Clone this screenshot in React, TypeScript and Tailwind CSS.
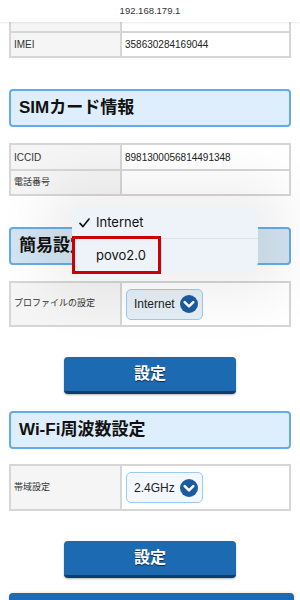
import React from 'react';

const font = { fontFamily: '"Liberation Sans", "Noto Sans CJK JP", sans-serif' };

const Heading: React.FC<{ title: string; dim?: boolean }> = ({ title, dim }) => (
  <div
    className={`h-[38px] rounded-[4px] border-2 border-[#62acec] flex items-center pl-[8px] text-[17px] font-bold text-[#111] ${
      dim ? 'bg-[#d3e3f1]' : 'bg-[#dfeefc]'
    }`}
  >
    {title}
  </div>
);

const Row: React.FC<{ label: string; h: string; first?: boolean; labelClass?: string; children?: React.ReactNode }> = ({
  label,
  h,
  first,
  labelClass = 'text-[9px]',
  children
}) => (
  <div className={`flex ${h} ${first ? '' : 'border-t-2 border-[#d6d6d6]'}`}>
    <div className={`w-[111px] shrink-0 bg-[#f5f5f5] border-r-2 border-[#d6d6d6] flex items-center pl-[3px] text-[#333] ${labelClass}`}>
      {label}
    </div>
    <div className="flex-1 bg-white flex items-center pl-[3px] text-[10px] text-[#222]">{children}</div>
  </div>
);

const Chevron = () => (
  <svg width="18" height="18" viewBox="0 0 20 20">
    <circle cx="10" cy="10" r="10" fill="#1b5c9f" />
    <path d="M5.2 7.8 L10 12.6 L14.8 7.8" stroke="#fff" strokeWidth="2.8" fill="none" strokeLinecap="round" strokeLinejoin="round" />
  </svg>
);

const Select: React.FC<{ value: string; bg: string }> = ({ value, bg }) => (
  <div className={`h-[31px] ml-[1px] rounded-[5px] border border-[#9ccbf0] ${bg} flex items-center gap-[5px] pl-[7px] pr-[4px]`}>
    <span className="text-[12px] text-[#222]">{value}</span>
    <Chevron />
  </div>
);

const Button = () => (
  <div className="flex justify-center">
    <div
      className="w-[172px] h-[37px] rounded-[4px] bg-[#1c6bb2] border-b-[3px] border-[#0f3d6e] shadow-[0_1px_2px_rgba(0,0,0,0.3)] flex items-center justify-center text-white font-bold text-[16px]"
      style={{ textShadow: '0 1px 1px rgba(0,0,0,0.6)' }}
    >
      設定
    </div>
  </div>
);

export default function App() {
  return (
    <div className="w-[300px] h-[600px] overflow-hidden bg-white relative" style={font}>
      {/* Address bar */}
      <div className="h-[22px] bg-white flex items-center justify-center text-[9.5px] text-[#333] shadow-[0_1px_2px_rgba(0,0,0,0.08)] relative z-10">
        192.168.179.1
      </div>

      <div className="px-[9px]">
        {/* Device table (cut at top) */}
        <div className="border-2 border-t-0 border-[#d6d6d6]">
          <Row label="" h="h-[9px]" first />
          <Row label="IMEI" h="h-[25px]" labelClass="text-[10px]">
            358630284169044
          </Row>
        </div>

        <div className="h-[31px]" />
        <Heading title="SIMカード情報" />
        <div className="h-[16px]" />
        <div className="border-2 border-[#d6d6d6]">
          <Row label="ICCID" h="h-[24px]" first labelClass="text-[10px]">
            8981300056814491348
          </Row>
          <Row label="電話番号" h="h-[25px]" />
        </div>

        <div className="h-[31px]" />
        <Heading title="簡易設定" dim />
        <div className="h-[16px]" />
        <div className="border-2 border-[#d6d6d6]">
          <Row label="プロファイルの設定" h="h-[42px]" first>
            <Select value="Internet" bg="bg-[#e6eef6]" />
          </Row>
        </div>

        <div className="h-[30px]" />
        <Button />
        <div className="h-[17px]" />
        <Heading title="Wi-Fi周波数設定" />
        <div className="h-[15px]" />
        <div className="border-2 border-[#d6d6d6]">
          <Row label="帯域設定" h="h-[43px]" first>
            <Select value="2.4GHz" bg="bg-[#f2f8fe]" />
          </Row>
        </div>

        <div className="h-[30px]" />
        <Button />
        <div className="h-[15px]" />
        <div className="h-[20px] rounded-[4px] bg-[#1c6bb2] shadow-[0_0_3px_rgba(200,150,100,0.5)] mr-[-3px]" />
      </div>

      {/* Picker popup */}
      <div
        className="absolute left-[72px] top-[207px] w-[186px] h-[65px] rounded-[10px] bg-[#eef3f9] shadow-[0_0_50px_30px_rgba(0,0,0,0.06)] z-20 text-[13px] text-[#111]"
        style={{ fontFamily: 'Inter, "Liberation Sans", sans-serif' }}
      >
        <div className="h-[32px] flex items-center border-b border-[#dde2ea]">
          <span className="w-[24px] flex justify-center">
            <svg width="11" height="10" viewBox="0 0 11 10">
              <path d="M1 5.4 L4 8.6 L10 1" stroke="#111" strokeWidth="1.6" fill="none" strokeLinecap="round" strokeLinejoin="round" />
            </svg>
          </span>
          <span>Internet</span>
        </div>
        <div className="h-[33px] flex items-center pl-[24px]">povo2.0</div>
      </div>
      {/* Highlight box */}
      <div className="absolute left-[72px] top-[236px] w-[89px] h-[38px] border-[3px] border-[#cc0000] z-30" />
    </div>
  );
}
